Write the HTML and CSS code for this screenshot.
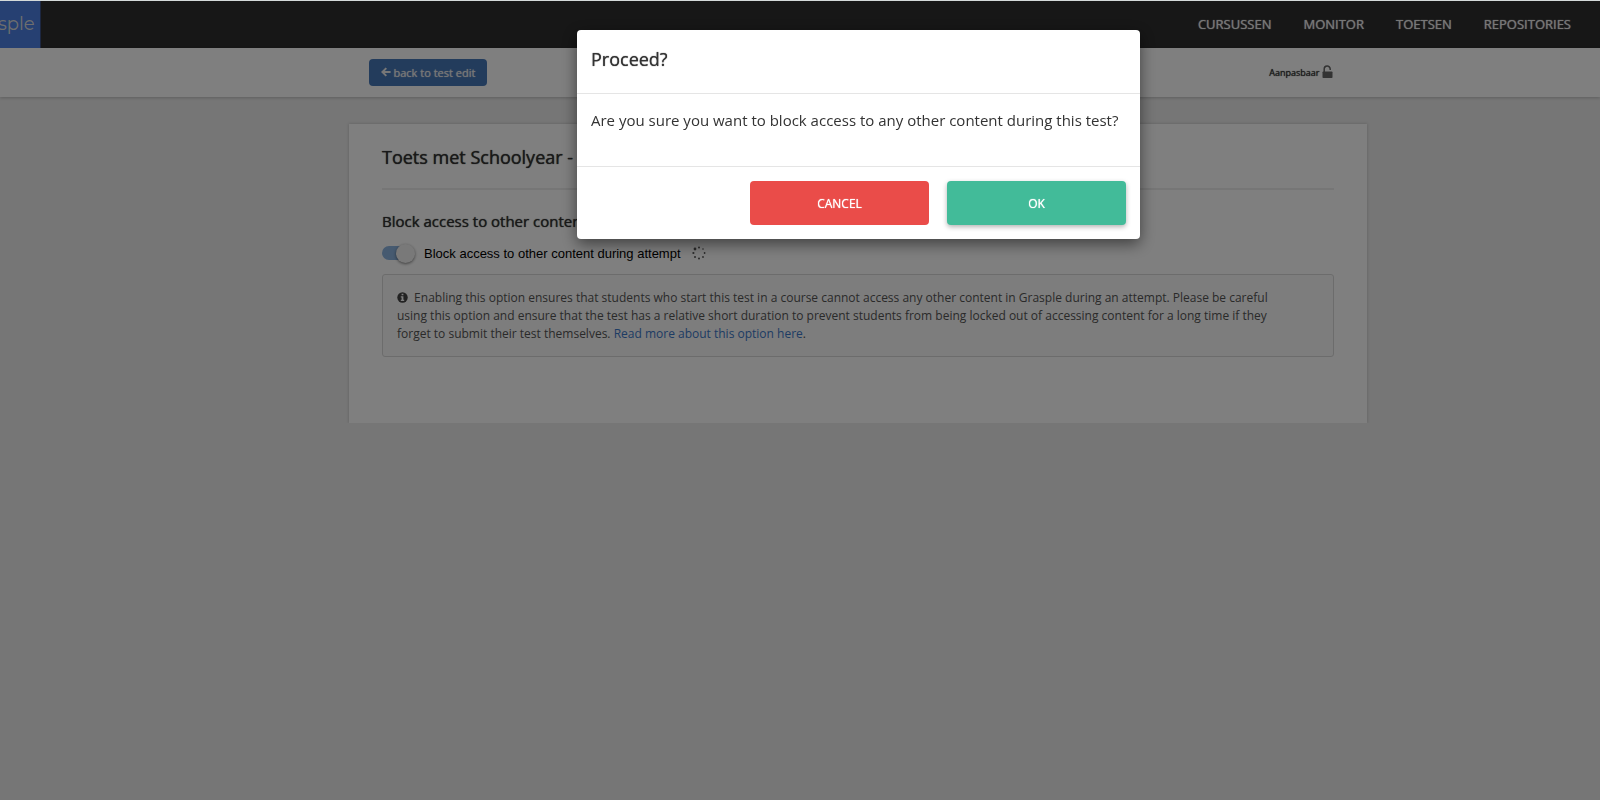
FILE: index.html
```html
<!DOCTYPE html>
<html lang="nl">

<head>
    <meta charset="UTF-8">
    <meta name="viewport" content="width=device-width, initial-scale=1.0">
    <title>Grasple - Toets</title>
    <link rel="stylesheet" href="styles.css">
</head>

<body>
    <header class="navbar">
        <a class="logo" href="#">sple</a>
        <nav class="nav-links">
            <a href="#">CURSUSSEN</a>
            <a href="#">MONITOR</a>
            <a href="#">TOETSEN</a>
            <a href="#">REPOSITORIES</a>
        </nav>
    </header>

    <div class="subheader">
        <div class="subheader-inner">
            <a class="back-button" href="#">
                <svg width="10" height="10" viewBox="0 0 10 10"><path d="M5.3 1.1L1.4 5l3.9 3.9M1.6 5H9.6" fill="none" stroke="currentColor" stroke-width="2"/></svg>
                back to test edit
            </a>
            <span class="editable">
                Aanpasbaar
                <svg width="11" height="14" viewBox="0 0 11 14"><path d="M2.2 7V4.2a3 3 0 0 1 6-.2v1" fill="none" stroke="currentColor" stroke-width="1.5"/><rect x="0.5" y="6.5" width="10" height="6.5" rx="0.8" fill="currentColor"/></svg>
            </span>
        </div>
    </div>

    <main class="page">
        <section class="card">
            <h1>Toets met Schoolyear - example</h1>
            <h2>Block access to other content</h2>
            <div class="option">
                <input type="checkbox" class="switch" id="blockAccess" checked>
                <label for="blockAccess">Block access to other content during attempt</label>
                <svg class="spinner" width="14" height="14" viewBox="0 0 14 14" fill="currentColor"><circle cx="3" cy="3" r="1.4"/><circle cx="7" cy="1.4" r="1"/><circle cx="11" cy="3" r="0.8"/><circle cx="12.6" cy="7" r="0.9"/><circle cx="11" cy="11" r="0.9"/><circle cx="7" cy="12.6" r="1"/><circle cx="3" cy="11" r="1"/><circle cx="1.4" cy="7" r="1.1"/></svg>
            </div>
            <p class="info">
                <svg width="11" height="11" viewBox="0 0 11 11"><circle cx="5.5" cy="5.5" r="5.2" fill="currentColor"/><path d="M4.6 1.7h1.8v1.5H4.6zM3.8 4.3h2.6v3.4h.8v1.2H3.8V7.700h.8V5.500h-.8z" class="info-mark"/></svg>
                Enabling this option ensures that students who start this test in a course cannot access any other content in Grasple during an attempt. Please be careful using this option and ensure that the test has a relative short duration to prevent students from being locked out of accessing content for a long time if they forget to submit their test themselves. <a href="#">Read more about this option here</a>.
            </p>
        </section>
    </main>

    <div class="overlay">
        <div class="modal" role="dialog" aria-labelledby="modalTitle">
            <h3 id="modalTitle">Proceed?</h3>
            <p>Are you sure you want to block access to any other content during this test?</p>
            <div class="modal-buttons">
                <button type="button" class="cancel">CANCEL</button>
                <button type="button" class="ok">OK</button>
            </div>
        </div>
    </div>
</body>

</html>
```

FILE: styles.css
```css
* {
    box-sizing: border-box;
}

body {
    margin: 0;
    border-top: 1px solid #d4dada;
    background-color: #ececec;
    color: #333;
    font-family: "Open Sans", sans-serif;
    font-size: 12px;
}

a {
    color: #3b78c8;
    text-decoration: none;
}

/* slightly heavier than regular, without the wider bold letters */
h1,
h2,
h3,
.nav-links a,
.back-button,
.editable,
.modal-buttons button {
    font-weight: 400;
    text-shadow: 0 0 1px currentColor;
}

.navbar {
    display: flex;
    align-items: center;
    justify-content: space-between;
    height: 47px;
    padding-right: 29px;
    background-color: #2e2e2e;
}

.logo {
    height: 47px;
    margin-left: -2px;
    padding-right: 5px;
    border-right: 1px solid #3a4f80;
    background-color: #4c80e4;
    color: #ddd;
    font-family: Montserrat, "Open Sans", sans-serif;
    font-size: 18px;
    line-height: 46px;
}

.nav-links {
    display: flex;
    gap: 32px;
    padding-bottom: 2px;
}

.nav-links a {
    color: #eee;
    font-size: 13px;
}

.subheader {
    height: 49px;
    padding-left: 101px;
    background-color: #fff;
    box-shadow: 0 1px 3px rgba(0, 0, 0, 0.2);
}

.subheader-inner {
    display: flex;
    align-items: center;
    justify-content: space-between;
    max-width: 964px;
    height: 48px;
    margin: 0 auto;
}

.back-button {
    display: flex;
    align-items: center;
    gap: 3px;
    height: 27px;
    padding: 0 12px;
    border-radius: 4px;
    background-color: #4678b8;
    color: #eee;
    font-size: 11px;
}

.editable {
    display: flex;
    align-items: center;
    gap: 2px;
    font-size: 9px;
}

.editable svg {
    color: #666;
}

.page {
    padding: 27px 0 0 116px;
}

.card {
    max-width: 1018px;
    min-height: 299px;
    margin: 0 auto;
    padding: 20px 33px;
    background-color: #fff;
    box-shadow: 0 0 3px rgba(0, 0, 0, 0.2);
}

h1 {
    margin: 0;
    padding-bottom: 18px;
    border-bottom: 2px solid #ececec;
    font-size: 18px;
    line-height: 26px;
}

h2 {
    margin: 20px 0 0;
    font-size: 15px;
    line-height: 22px;
}

.option {
    display: flex;
    align-items: center;
    height: 20px;
    margin-top: 11px;
    color: #000;
    font-family: "Liberation Sans", Arial, sans-serif;
    font-size: 13px;
}

/* toggle switch */
.switch {
    display: flex;
    align-items: center;
    justify-content: flex-end;
    width: 33px;
    height: 14px;
    margin: 0 9px 0 0;
    border-radius: 7px;
    background: linear-gradient(to right, #8cb4e0 26px, transparent 26px);
    appearance: none;
}

.switch::before {
    content: "";
    width: 19px;
    height: 19px;
    flex: none;
    border-radius: 50%;
    background-color: #f2f2f2;
    box-shadow: 0 1px 3px rgba(0, 0, 0, 0.5);
}

.spinner {
    margin-left: 11px;
    color: #555;
}

.info {
    margin: 11px 0 0;
    padding: 14px 50px 13px 14px;
    border: 1px solid #d8d8d8;
    border-radius: 3px;
    background-color: #fafafa;
    color: #555;
    line-height: 18px;
}

.info svg {
    margin-right: 3px;
    vertical-align: -1px;
    color: #444;
}

.info-mark {
    fill: #fafafa;
}

.overlay {
    position: fixed;
    top: 1px;
    right: 0;
    bottom: 0;
    left: 0;
    display: flex;
    align-items: flex-start;
    justify-content: center;
    padding: 29px 0 0 117px;
    background-color: rgba(0, 0, 0, 0.5);
}

.modal {
    max-width: 563px;
    width: 100%;
    border-radius: 4px;
    background-color: #fff;
    box-shadow: 0 5px 15px rgba(0, 0, 0, 0.5);
}

.modal h3 {
    margin: 0;
    padding: 16px 14px 21px;
    font-size: 18px;
    line-height: 26px;
}

.modal p {
    margin: 0;
    padding: 14px 14px 34px;
    border-top: 1px solid #e5e5e5;
    border-bottom: 1px solid #e5e5e5;
    font-size: 15px;
    line-height: 24px;
}

.modal-buttons {
    display: flex;
    justify-content: flex-end;
    gap: 18px;
    padding: 14px;
}

.modal-buttons button {
    width: 179px;
    height: 44px;
    border: 0;
    border-radius: 4px;
    color: #fff;
    font-family: inherit;
    font-size: 12px;
}

.cancel {
    background-color: #ea4c49;
}

.modal-buttons .ok {
    background-color: #42bb99;
    box-shadow: 0 2px 5px rgba(0, 0, 0, 0.3);
}
```
